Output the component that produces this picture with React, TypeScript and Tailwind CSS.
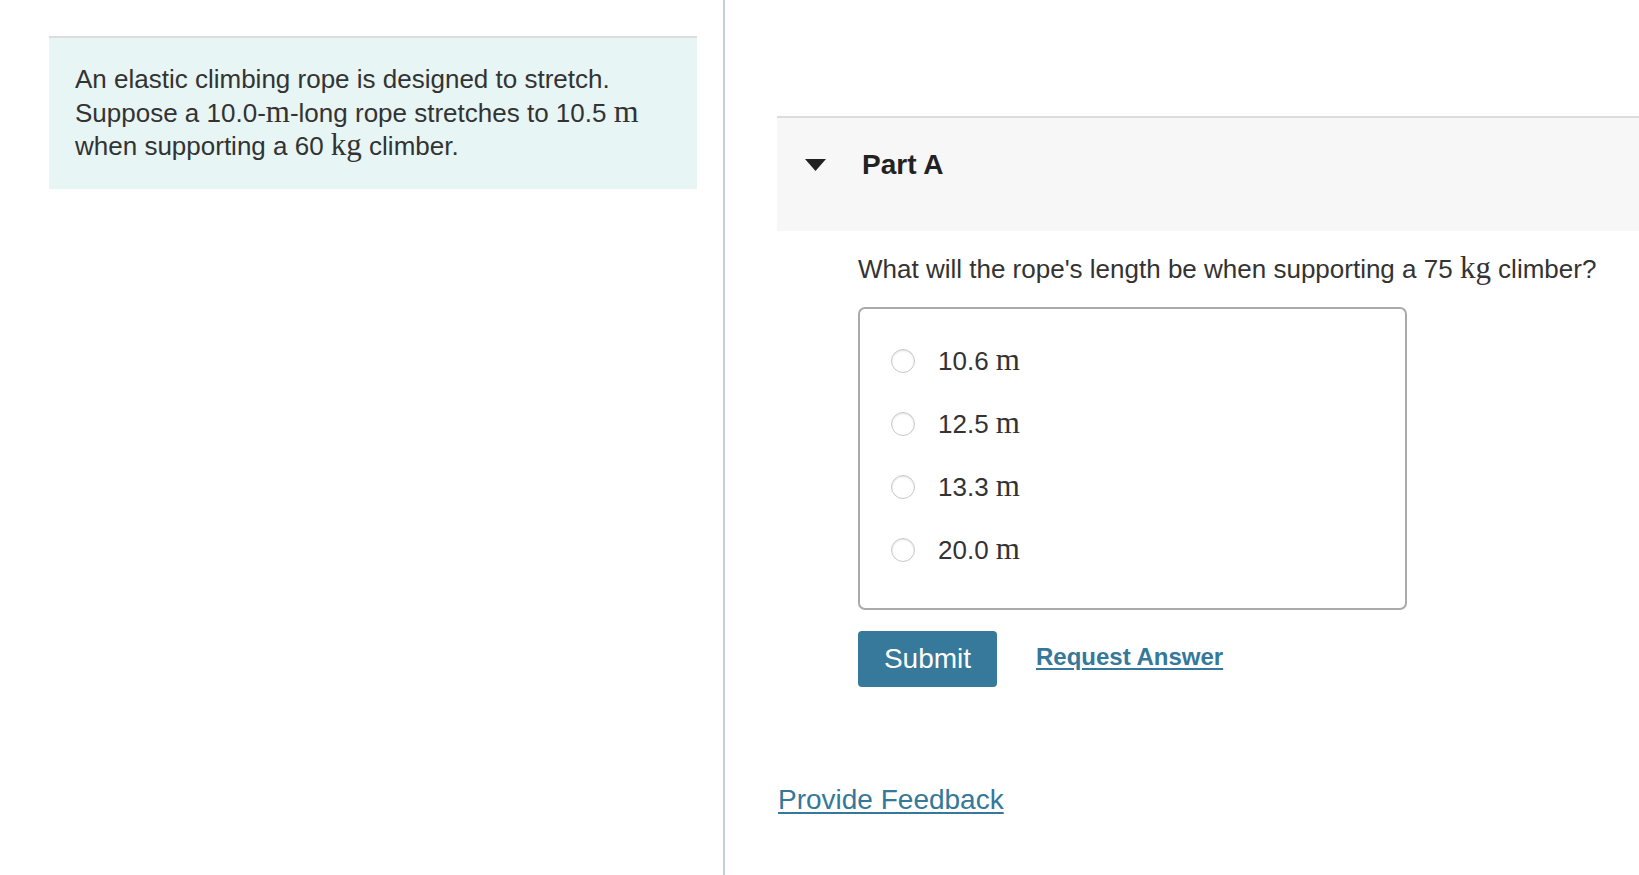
import React from "react";

const M = ({ children }: { children: React.ReactNode }) => (
  <span className="font-['Liberation_Serif',serif] text-[31px]">{children}</span>
);

const options = ["10.6", "12.5", "13.3", "20.0"];

export default function App() {
  return (
    <div className="w-[1639px] h-[875px] bg-white flex font-['Liberation_Sans',Arial,sans-serif] text-[#333333] overflow-hidden">
      <div className="w-[723px] shrink-0 pt-[36px] pl-[49px] pr-[26px]">
        <div className="border-t-2 border-[#dcdcdc] bg-[#e7f5f5] pl-[26px] pr-[10px] pt-[25px] pb-[27px] text-[26px] leading-[32px] whitespace-nowrap">
          <div>An elastic climbing rope is designed to stretch.</div>
          <div>
            Suppose a 10.0-<M>m</M>-long rope stretches to 10.5 <span className="font-['Liberation_Serif',serif] text-[32px]">m</span>
          </div>
          <div>
            when supporting a 60 <M>kg</M> climber.
          </div>
        </div>
      </div>
      <div className="w-[2px] shrink-0 bg-[#c3cfdd]" />
      <div className="flex-1 pt-[116px] pl-[52px]">
        <div className="h-[115px] border-t-2 border-[#dddddd] bg-[#f7f7f7] pt-[31px] pl-[28px] flex items-start">
          <div className="h-[32px] flex items-center">
            <svg width="21" height="12" viewBox="0 0 21 12">
              <polygon points="0,0 21,0 10.5,12" fill="#222222" />
            </svg>
          </div>
          <div className="ml-[36px] text-[28px] leading-[32px] font-bold text-[#222222]">Part A</div>
        </div>
        <div className="ml-[81px]">
          <div className="mt-[21px] text-[26px] leading-[32px] whitespace-nowrap">
            What will the rope's length be when supporting a 75 <M>kg</M> climber?
          </div>
          <div className="mt-[22px] w-[549px] h-[303px] border-2 border-[#aaaaaa] rounded-[7px] pt-[20px] pl-[31px]">
            {options.map((o) => (
              <div key={o} className="h-[63px] flex items-center">
                <div className="w-[24px] h-[24px] rounded-full border border-[#c8c8c8] bg-white shadow-[inset_0_1px_2px_rgba(0,0,0,0.12)]" />
                <div className="ml-[23px] text-[26px] leading-[32px] whitespace-nowrap">
                  {o} <M>m</M>
                </div>
              </div>
            ))}
          </div>
          <div className="mt-[21px] flex items-center">
            <div className="w-[139px] h-[56px] rounded-[4px] bg-[#36799a] text-white text-[28px] flex items-center justify-center">
              Submit
            </div>
            <a className="ml-[39px] mb-[4px] text-[24px] font-bold text-[#357899] underline underline-offset-[3px]">
              Request Answer
            </a>
          </div>
        </div>
        <div className="mt-[97px] ml-[1px] text-[28px] leading-[32px]">
          <a className="text-[#357899] underline underline-offset-[3px]">Provide Feedback</a>
        </div>
      </div>
    </div>
  );
}
